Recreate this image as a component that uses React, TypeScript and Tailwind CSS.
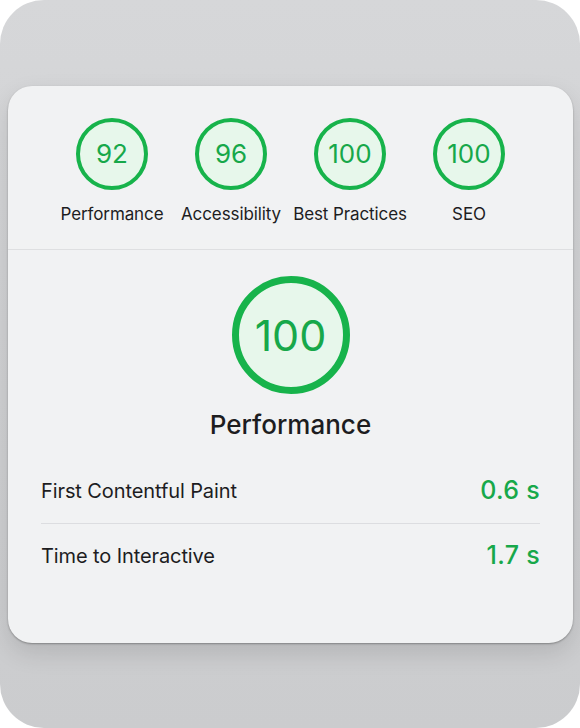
import React from "react";

const font = { fontFamily: "Inter, 'Liberation Sans', sans-serif" };

function Gauge({ value, size, stroke, textClass }: { value: string; size: number; stroke: number; textClass: string }) {
  return (
    <div
      className={`flex items-center justify-center rounded-full border-[#17b34b] bg-[#e7f7eb] ${textClass}`}
      style={{ width: size, height: size, borderWidth: stroke }}
    >
      <span className="leading-none text-[#17a84a]">{value}</span>
    </div>
  );
}

const scores = [
  { v: "92", label: "Performance" },
  { v: "96", label: "Accessibility" },
  { v: "100", label: "Best Practices" },
  { v: "100", label: "SEO" },
];

export default function App() {
  return (
    <div className="bg-white" style={font}>
      <div className="w-[580px] h-[728px] rounded-[44px] bg-gradient-to-b from-[#d6d7d9] to-[#cbccce] pt-[86px] pl-[8px]">
        <div className="w-[565px] h-[557px] rounded-[24px] bg-[#f1f2f3] shadow-[0_1px_2px_rgba(0,0,0,0.3),0_10px_24px_rgba(0,0,0,0.12)] flex flex-col">
          <div className="flex justify-center pt-[32px] pb-[24px] border-b border-[#dedfe1]">
            {scores.map((s, i) => (
              <div key={i} className="w-[119px] flex flex-col items-center">
                <Gauge value={s.v} size={72} stroke={4} textClass="text-[26px]" />
                <div className="mt-[13px] text-[17px] leading-[22px] text-[#1d1d1f] tracking-[-0.1px]">{s.label}</div>
              </div>
            ))}
          </div>
          <div className="flex flex-col items-center pt-[26px]">
            <Gauge value="100" size={118} stroke={7} textClass="text-[43px]" />
            <div className="mt-[14px] text-[26px] leading-[34px] font-medium text-[#1d1d1f]">Performance</div>
          </div>
          <div className="mx-[33px] mt-[16px]">
            <div className="flex items-center justify-between h-[66px] border-b border-[#dcdde0]">
              <span className="text-[20px] text-[#1d1d1f] tracking-[-0.1px]">First Contentful Paint</span>
              <span className="text-[25px] font-medium text-[#17a84a] tracking-[0.3px]">0.6 s</span>
            </div>
            <div className="flex items-center justify-between h-[64px]">
              <span className="text-[20px] text-[#1d1d1f] tracking-[-0.1px]">Time to Interactive</span>
              <span className="text-[25px] font-medium text-[#17a84a] tracking-[0.3px]">1.7 s</span>
            </div>
          </div>
        </div>
      </div>
    </div>
  );
}
